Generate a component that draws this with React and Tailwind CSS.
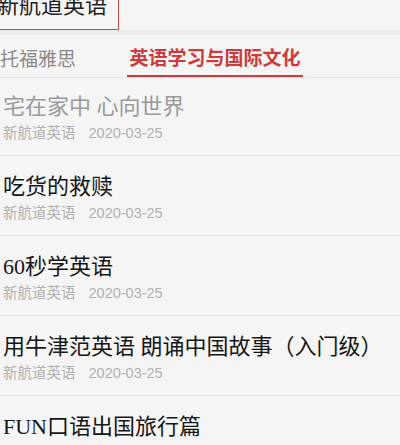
import React from 'react'

const items = [
  { title: '宅在家中 心向世界', read: true },
  { title: '吃货的救赎' },
  { title: '60秒学英语' },
  { title: '用牛津范英语 朗诵中国故事（入门级）' },
  { title: 'FUN口语出国旅行篇' },
]

export default function App() {
  return (
    <div className="w-[400px] h-[445px] overflow-hidden bg-[#f5f5f5] font-['Liberation_Sans','Noto_Sans_CJK_SC',sans-serif]">
      <div className="h-[30px] bg-[#f5f5f5] flex">
        <div className="-ml-[3px] w-[122px] h-[30px] border-r-[1.5px] border-b-[1.5px] border-[#c9484a] flex items-end overflow-hidden">
          <span className="pb-[12px] text-[22px] leading-[22px] text-[#1e1e1e] font-['Liberation_Serif','Noto_Sans_CJK_SC',serif]">新航道英语</span>
        </div>
      </div>
      <div className="h-[5px] bg-[#ebebeb]" />

      <div className="h-[43px] flex items-stretch border-b border-[#e4e4e4]">
        <div className="w-[127px] flex items-center pt-[8px] text-[19px] text-[#8a8a8a]">托福雅思</div>
        <div className="w-[176px] flex items-center justify-center pt-[8px] border-b-2 border-[#cf3a3d] text-[19px] font-bold text-[#cf3a3d]">
          英语学习与国际文化
        </div>
      </div>

      <div>
        {items.map((it, i) => (
          <div key={i} className={`${i === 0 ? 'pt-[16px]' : 'pt-[18px]'} pb-[13px] border-b border-[#e6e6e6]`}>
            <div className={`pl-[3px] text-[22px] leading-[26px] whitespace-nowrap font-['Liberation_Serif','Noto_Sans_CJK_SC',serif] ${it.read ? 'text-[#9a9a9a]' : 'text-[#161616]'}`}>
              {it.title}
            </div>
            <div className="pl-[3px] mt-[4px] h-[18px] flex items-center gap-[13px] text-[14.5px] leading-[18px] text-[#b0b0b0]">
              <span>新航道英语</span>
              <span>2020-03-25</span>
            </div>
          </div>
        ))}
      </div>
    </div>
  )
}
